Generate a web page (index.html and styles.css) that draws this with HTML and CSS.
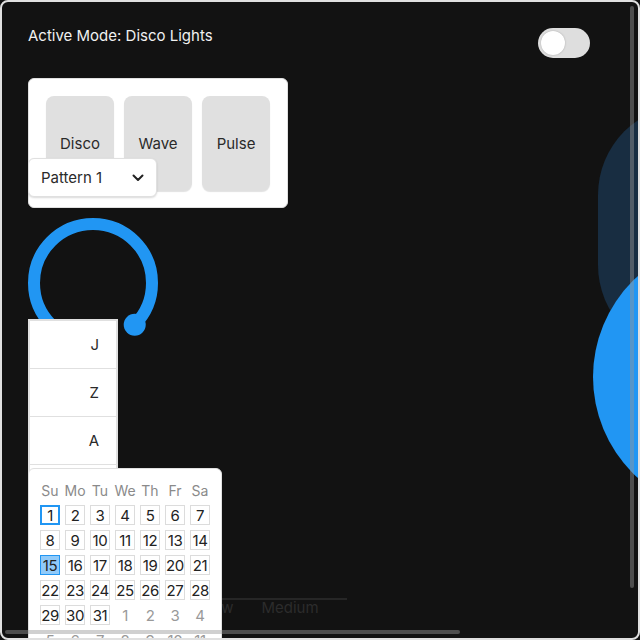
FILE: index.html
```html
<!DOCTYPE html>
<html lang="en">
<head>
<meta charset="utf-8">
<title>Disco Lights</title>
<link rel="stylesheet" href="styles.css">
</head>
<body>
<div class="panel">
  <div class="deco-pill"></div>
  <div class="deco-circle"></div>

  <div class="header">
    <span class="mode-label">Active Mode: Disco Lights</span>
    <div class="toggle"><span class="knob"></span></div>
  </div>

  <div class="mode-block">
    <div class="mode-card">
      <button class="mode-btn">Disco</button>
      <button class="mode-btn">Wave</button>
      <button class="mode-btn">Pulse</button>
    </div>
    <div class="select">
      <span>Pattern 1</span>
      <svg class="chev" width="12" height="8" viewBox="0 0 12 8"><polyline points="1.5,1.5 6,6 10.5,1.5" fill="none" stroke="#222" stroke-width="2" stroke-linecap="round" stroke-linejoin="round"/></svg>
    </div>
  </div>

  <div class="dial">
    <svg width="130" height="130" viewBox="0 0 130 130">
      <path d="M23.28 106.72 A59 59 0 1 1 106.72 106.72" fill="none" stroke="#2196f3" stroke-width="12"/>
      <circle cx="106.72" cy="106.72" r="11" fill="#2196f3"/>
    </svg>
  </div>

  <ul class="list">
    <li>J</li>
    <li>Z</li>
    <li>A</li>
    <li>K</li>
  </ul>

  <div class="slider">
    <div class="slider-labels"><span>Low</span><span>Medium</span></div>
  </div>

  <div class="calendar">
    <div class="cal-grid">
      <span class="dow">Su</span><span class="dow">Mo</span><span class="dow">Tu</span><span class="dow">We</span><span class="dow">Th</span><span class="dow">Fr</span><span class="dow">Sa</span>
      <span class="day today">1</span><span class="day">2</span><span class="day">3</span><span class="day">4</span><span class="day">5</span><span class="day">6</span><span class="day">7</span>
      <span class="day">8</span><span class="day">9</span><span class="day">10</span><span class="day">11</span><span class="day">12</span><span class="day">13</span><span class="day">14</span>
      <span class="day selected">15</span><span class="day">16</span><span class="day">17</span><span class="day">18</span><span class="day">19</span><span class="day">20</span><span class="day">21</span>
      <span class="day">22</span><span class="day">23</span><span class="day">24</span><span class="day">25</span><span class="day">26</span><span class="day">27</span><span class="day">28</span>
      <span class="day">29</span><span class="day">30</span><span class="day">31</span><span class="day other">1</span><span class="day other">2</span><span class="day other">3</span><span class="day other">4</span>
      <span class="day other">5</span><span class="day other">6</span><span class="day other">7</span><span class="day other">8</span><span class="day other">9</span><span class="day other">10</span><span class="day other">11</span>
    </div>
  </div>

  <div class="thumb-v"></div>
  <div class="thumb-h"></div>
</div>
</body>
</html>
```

FILE: styles.css
```css
* { box-sizing: border-box; }

html, body {
  margin: 0;
  padding: 0;
  background: #121212;
  font-family: Inter, "Open Sans", "DejaVu Sans", sans-serif;
}

.panel {
  position: relative;
  width: 640px;
  height: 640px;
  border: 2px solid #e0e0e0;
  border-radius: 8px;
  background: #121212;
  overflow: hidden;
  padding: 24px 26px;
}

.deco-pill {
  position: absolute;
  left: 596px;
  top: 103px;
  width: 200px;
  height: 250px;
  border-radius: 90px;
  background: #182d41;
}

.deco-circle {
  position: absolute;
  left: 591px;
  top: 239px;
  width: 272px;
  height: 272px;
  border-radius: 50%;
  background: #2196f3;
}

.header {
  display: flex;
  justify-content: space-between;
  align-items: flex-start;
  width: 562px;
}

.mode-label {
  color: #f0f0f0;
  font-size: 15px;
  line-height: 20px;
}

.toggle {
  position: relative;
  margin-top: 2px;
  width: 52px;
  height: 30px;
  border-radius: 15px;
  background: #dedede;
}

.toggle .knob {
  position: absolute;
  left: 3px;
  top: 3px;
  width: 24px;
  height: 24px;
  border-radius: 50%;
  background: #fff;
  box-shadow: 0 0 2px rgba(0,0,0,0.25);
}

.mode-block {
  position: relative;
  margin-top: 20px;
  width: 260px;
}

.mode-card {
  display: flex;
  gap: 10px;
  width: 260px;
  height: 130px;
  padding: 17px;
  background: #fff;
  border: 1px solid #e0e0e0;
  border-radius: 6px;
}

.mode-btn {
  width: 68px;
  height: 94px;
  border: none;
  border-radius: 8px;
  background: #e0e0e0;
  box-shadow: 0 2px 1px rgba(0,0,0,0.12);
  font-family: inherit;
  font-size: 15px;
  color: #2a2a2a;
  padding: 0;
}

.select {
  position: absolute;
  left: 0;
  top: 80px;
  width: 129px;
  height: 39px;
  display: flex;
  align-items: center;
  justify-content: space-between;
  padding: 0 12px;
  background: #fff;
  border: 1px solid #e0e0e0;
  border-radius: 6px;
  box-shadow: 0 1px 2px rgba(0,0,0,0.15);
  font-size: 15px;
  color: #2a2a2a;
}

.dial {
  margin-top: 10px;
  width: 130px;
  height: 130px;
}

.dial svg { display: block; }

.list {
  position: relative;
  list-style: none;
  margin: -29px 0 0 0;
  padding: 0;
  width: 90px;
  background: #fff;
  border: 2px solid #e0e0e0;
}

.list li {
  height: 48px;
  line-height: 47px;
  border-bottom: 1px solid #e0e0e0;
  text-align: right;
  padding-right: 17px;
  font-size: 15px;
  color: #2a2a2a;
}

.slider {
  margin-top: 83px;
  width: 319px;
  border-top: 2px solid #262626;
}

.slider-labels {
  display: flex;
  gap: 28px;
  padding-left: 176px;
  font-size: 15px;
  line-height: 16px;
  color: #2c2c2c;
}

.calendar {
  position: relative;
  z-index: 1;
  margin-top: -148px;
  width: 194px;
  background: #fff;
  border: 1px solid #e0e0e0;
  border-radius: 6px;
  padding: 11px;
}

.cal-grid {
  display: grid;
  grid-template-columns: repeat(7, 20px);
  grid-auto-rows: 20px;
  gap: 5px;
}

.dow {
  display: flex;
  align-items: center;
  justify-content: center;
  font-size: 14px;
  color: #8a8a8a;
  white-space: nowrap;
}

.day {
  display: flex;
  align-items: center;
  justify-content: center;
  border: 1px solid #dcdcdc;
  font-size: 15px;
  color: #222;
  letter-spacing: -0.4px;
  white-space: nowrap;
}

.day.today {
  border: 2px solid #2196f3;
}

.day.selected {
  background: #90caf9;
  border-color: #2196f3;
}

.day.other {
  border-color: transparent;
  color: #999;
}

.thumb-v {
  position: absolute;
  z-index: 5;
  right: 4px;
  top: 4px;
  width: 4px;
  height: 582px;
  border-radius: 2px;
  background: rgba(150,150,150,0.45);
}

.thumb-h {
  position: absolute;
  z-index: 5;
  left: 3px;
  bottom: 4px;
  width: 455px;
  height: 4px;
  border-radius: 2px;
  background: rgba(150,150,150,0.45);
}
```
